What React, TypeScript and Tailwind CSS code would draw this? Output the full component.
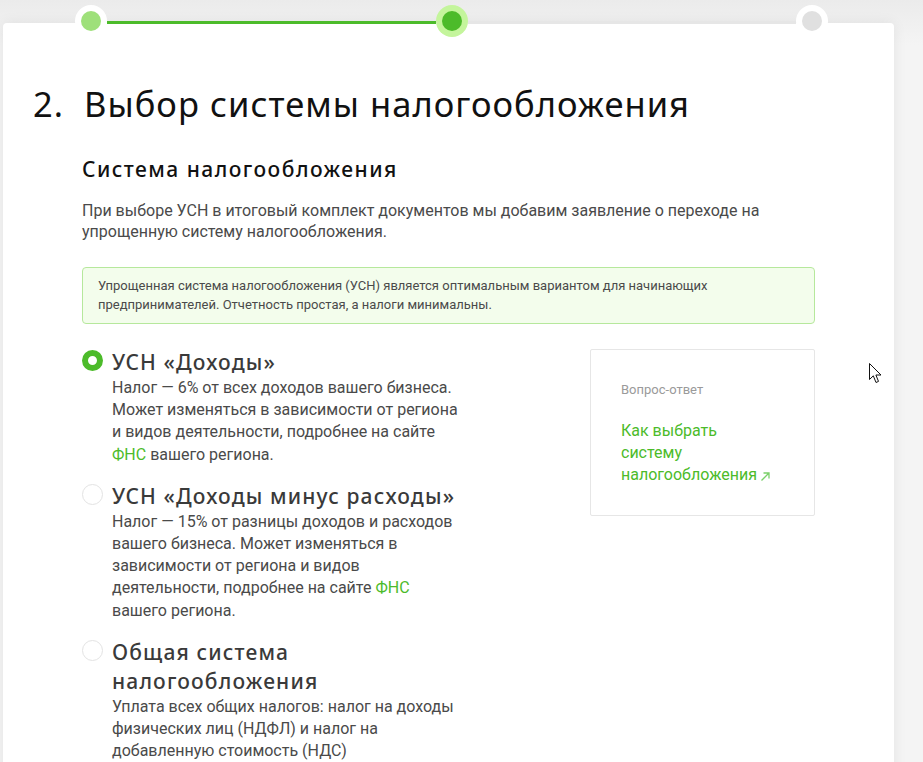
import React from "react";

const body = "font-['Roboto',sans-serif]";
const head = "font-['Noto_Sans',sans-serif]";

function Radio({ checked }: { checked?: boolean }) {
  return checked ? (
    <div className="w-[21px] h-[21px] rounded-full border-[6px] border-[#4cbb2a] bg-white shrink-0 mt-[2px]" />
  ) : (
    <div className="w-[21px] h-[21px] rounded-full border border-[#e3e3e3] bg-white shrink-0 mt-[2px]" />
  );
}

function Option({
  checked,
  title,
  children,
}: {
  checked?: boolean;
  title: React.ReactNode;
  children: React.ReactNode;
}) {
  return (
    <div className="flex gap-[9px] mb-[16px]">
      <Radio checked={checked} />
      <div className="w-[356px]">
        <div className={`${head} text-[21px] leading-[29px] font-medium text-[#3a3a3a] tracking-[0.055em]`}>{title}</div>
        <div className={`${body} text-[16px] leading-[22.2px] text-[#4a4a4a]`}>{children}</div>
      </div>
    </div>
  );
}

export default function App() {
  return (
    <div className="relative min-h-screen overflow-hidden bg-[linear-gradient(#ebebeb,#f4f4f4_45px)]">
      <div className="w-[891px] ml-[3px] pt-[5px]">
        <div className="relative z-10 ml-[72px] w-[753px] h-[32px] flex">
          <div className="w-[32px] h-[32px] rounded-full bg-white flex items-center justify-center shrink-0">
            <div className="w-[20px] h-[20px] rounded-full bg-[#9ee07a]" />
          </div>
          <div className="flex-1 h-[3px] mt-[16px] bg-[#4cbb2a]" />
          <div className="w-[32px] h-[32px] rounded-full bg-[#c4f59c] flex items-center justify-center shrink-0">
            <div className="w-[20px] h-[20px] rounded-full bg-[#4cbb2a]" />
          </div>
          <div className="flex-1 h-[3px] mt-[16px] bg-[#e6e6e6]" />
          <div className="w-[32px] h-[32px] rounded-full bg-white flex items-center justify-center shrink-0">
            <div className="w-[20px] h-[20px] rounded-full bg-[#e0e0e0]" />
          </div>
        </div>
        <div className="-mt-[14px] bg-white rounded-[4px] shadow-[0_0_14px_rgba(0,0,0,0.07)] pb-[60px]">
          <h1 className={`${head} pl-[30px] pt-[60px] text-[34.5px] leading-[42px] text-[#111] tracking-[0.03em]`}>
            2.&nbsp; Выбор системы налогообложения
          </h1>
          <div className="ml-[79px] w-[733px]">
            <h2 className={`${head} mt-[30px] text-[21px] leading-[28px] font-medium text-[#111] tracking-[0.07em]`}>
              Система налогообложения
            </h2>
            <p className={`${body} mt-[17px] text-[16px] leading-[21px] text-[#4a4a4a] pr-[40px]`}>
              При выборе УСН в итоговый комплект документов мы добавим заявление о переходе на упрощенную систему налогообложения.
            </p>
            <div className={`${body} mt-[25px] border border-[#b6e89c] bg-[#f3fdec] rounded-[4px] px-[15px] pt-[8px] pb-[9px] text-[13px] leading-[19px] text-[#4a4a4a]`}>
              Упрощенная система налогообложения (УСН) является оптимальным вариантом для начинающих
              <br />
              предпринимателей. Отчетность простая, а налоги минимальны.
            </div>
            <div className="mt-[24px] flex justify-between">
              <div>
                <Option checked title="УСН «Доходы»">
                  Налог — 6% от всех доходов вашего бизнеса. Может изменяться в зависимости от региона и видов деятельности, подробнее на сайте{" "}
                  <span className="text-[#4cbb2a]">ФНС</span> вашего региона.
                </Option>
                <Option title="УСН «Доходы минус расходы»">
                  Налог — 15% от разницы доходов и расходов вашего бизнеса. Может изменяться в зависимости от региона и видов деятельности, подробнее на сайте{" "}
                  <span className="text-[#4cbb2a]">ФНС</span> вашего региона.
                </Option>
                <Option title="Общая система налогообложения">
                  Уплата всех общих налогов: налог на доходы физических лиц (НДФЛ) и налог на добавленную стоимость (НДС)
                </Option>
              </div>
              <div className="w-[225px] h-[167px] self-start mt-[1px] border border-[#e6e6e6] rounded-[2px] px-[30px] pt-[31px]">
                <div className={`${body} text-[13px] leading-[18px] text-[#9a9a9a]`}>Вопрос-ответ</div>
                <div className={`${body} mt-[21px] text-[16px] leading-[22px] text-[#4cbb2a] w-[150px]`}>
                  Как выбрать систему налогообложения
                  <svg className="inline-block ml-[3px] align-[-2px]" width="11" height="11" viewBox="0 0 11 11" fill="none" stroke="#7bd06a" strokeWidth="1.3">
                    <path d="M1.5 9.5 L9 2 M3.5 2 H9 V7.5" />
                  </svg>
                </div>
              </div>
            </div>
          </div>
        </div>
      </div>
      <svg className="absolute left-[869px] top-[363px]" width="14" height="22" viewBox="0 0 14 22">
        <path d="M0.5 0.5 L0.5 16.5 L4.3 12.8 L7 19.5 L9.5 18.4 L6.9 12 L12 12 Z" fill="#fff" stroke="#111" strokeWidth="1" strokeLinejoin="round" />
      </svg>
    </div>
  );
}
